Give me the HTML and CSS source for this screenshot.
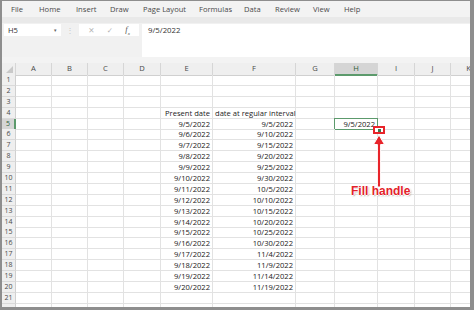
FILE: index.html
```html
<!DOCTYPE html>
<html>
<head>
<meta charset="utf-8">
<link rel="stylesheet" href="styles.css">
</head>
<body>
<div class="app">
  <div class="menubar">
    <span>File</span><span>Home</span><span>Insert</span><span>Draw</span><span>Page Layout</span><span>Formulas</span><span>Data</span><span>Review</span><span>View</span><span>Help</span>
  </div>
  <div class="band"></div>
  <div class="formula-row">
    <div class="namebox"><span>H5</span><span class="caret">&#9662;</span></div>
    <div class="dots">&#8942;</div>
    <div class="fxbox">
      <span class="ico">&#10005;</span><span class="ico">&#10003;</span><span class="fx">f<sub>x</sub></span>
    </div>
    <div class="finput">9/5/2022</div>
  </div>
  <div class="sheet">
    <div class="row hdr"><span class="corner"></span><span>A</span><span>B</span><span>C</span><span>D</span><span>E</span><span>F</span><span>G</span><span class="hsel">H</span><span>I</span><span>J</span><span>K</span></div>
    <div class="row"><span class="rh">1</span><span></span><span></span><span></span><span></span><span></span><span></span><span></span><span></span><span></span><span></span><span></span></div>
    <div class="row"><span class="rh">2</span><span></span><span></span><span></span><span></span><span></span><span></span><span></span><span></span><span></span><span></span><span></span></div>
    <div class="row"><span class="rh">3</span><span></span><span></span><span></span><span></span><span></span><span></span><span></span><span></span><span></span><span></span><span></span></div>
    <div class="row"><span class="rh">4</span><span></span><span></span><span></span><span></span><span class="num">Present date</span><span class="txt">date at regular interval</span><span></span><span></span><span></span><span></span><span></span></div>
    <div class="row"><span class="rh rsel">5</span><span></span><span></span><span></span><span></span><span class="num">9/5/2022</span><span class="num">9/5/2022</span><span></span><span class="num sel">9/5/2022</span><span></span><span></span><span></span></div>
    <div class="row"><span class="rh">6</span><span></span><span></span><span></span><span></span><span class="num">9/6/2022</span><span class="num">9/10/2022</span><span></span><span></span><span></span><span></span><span></span></div>
    <div class="row"><span class="rh">7</span><span></span><span></span><span></span><span></span><span class="num">9/7/2022</span><span class="num">9/15/2022</span><span></span><span></span><span></span><span></span><span></span></div>
    <div class="row"><span class="rh">8</span><span></span><span></span><span></span><span></span><span class="num">9/8/2022</span><span class="num">9/20/2022</span><span></span><span></span><span></span><span></span><span></span></div>
    <div class="row"><span class="rh">9</span><span></span><span></span><span></span><span></span><span class="num">9/9/2022</span><span class="num">9/25/2022</span><span></span><span></span><span></span><span></span><span></span></div>
    <div class="row"><span class="rh">10</span><span></span><span></span><span></span><span></span><span class="num">9/10/2022</span><span class="num">9/30/2022</span><span></span><span></span><span></span><span></span><span></span></div>
    <div class="row"><span class="rh">11</span><span></span><span></span><span></span><span></span><span class="num">9/11/2022</span><span class="num">10/5/2022</span><span></span><span></span><span></span><span></span><span></span></div>
    <div class="row"><span class="rh">12</span><span></span><span></span><span></span><span></span><span class="num">9/12/2022</span><span class="num">10/10/2022</span><span></span><span></span><span></span><span></span><span></span></div>
    <div class="row"><span class="rh">13</span><span></span><span></span><span></span><span></span><span class="num">9/13/2022</span><span class="num">10/15/2022</span><span></span><span></span><span></span><span></span><span></span></div>
    <div class="row"><span class="rh">14</span><span></span><span></span><span></span><span></span><span class="num">9/14/2022</span><span class="num">10/20/2022</span><span></span><span></span><span></span><span></span><span></span></div>
    <div class="row"><span class="rh">15</span><span></span><span></span><span></span><span></span><span class="num">9/15/2022</span><span class="num">10/25/2022</span><span></span><span></span><span></span><span></span><span></span></div>
    <div class="row"><span class="rh">16</span><span></span><span></span><span></span><span></span><span class="num">9/16/2022</span><span class="num">10/30/2022</span><span></span><span></span><span></span><span></span><span></span></div>
    <div class="row"><span class="rh">17</span><span></span><span></span><span></span><span></span><span class="num">9/17/2022</span><span class="num">11/4/2022</span><span></span><span></span><span></span><span></span><span></span></div>
    <div class="row"><span class="rh">18</span><span></span><span></span><span></span><span></span><span class="num">9/18/2022</span><span class="num">11/9/2022</span><span></span><span></span><span></span><span></span><span></span></div>
    <div class="row"><span class="rh">19</span><span></span><span></span><span></span><span></span><span class="num">9/19/2022</span><span class="num">11/14/2022</span><span></span><span></span><span></span><span></span><span></span></div>
    <div class="row"><span class="rh">20</span><span></span><span></span><span></span><span></span><span class="num">9/20/2022</span><span class="num">11/19/2022</span><span></span><span></span><span></span><span></span><span></span></div>
    <div class="row"><span class="rh">21</span><span></span><span></span><span></span><span></span><span></span><span></span><span></span><span></span><span></span><span></span><span></span></div>
    <div class="row"><span class="rh"></span><span></span><span></span><span></span><span></span><span></span><span></span><span></span><span></span><span></span><span></span><span></span></div>

    <div class="handle-mark"><span class="handle"></span></div>
    <svg class="arrow" width="20" height="56" viewBox="0 0 20 56">
      <polygon points="10,1 15.5,10.5 11.6,10.5 11.6,53 8.4,53 8.4,10.5 4.5,10.5" fill="#e8242a" stroke="#ffffff" stroke-width="1" stroke-linejoin="round"/>
    </svg>
    <div class="label">Fill handle</div>
  </div>
</div>
</body>
</html>
```

FILE: styles.css
```css
html, body {
  margin: 0;
  padding: 0;
}
body {
  background: #8e8e8e;
  width: 474px;
  height: 310px;
  overflow: hidden;
}
.app {
  margin: 1px 0 0 2px;
  width: 468px;
  height: 306px;
  background: #f3f3f3;
  overflow: hidden;
  font-family: "Open Sans", "Liberation Sans", sans-serif;
  color: #444;
}
.menubar {
  height: 16px;
  display: grid;
  grid-template-columns: 28px 37px 34px 33px 56px 45px 31px 38px 31px auto;
  padding-left: 9px;
  align-items: center;
  font-size: 7.6px;
  color: #4a4a4a;
  background: #f3f3f3;
}
.band {
  height: 6px;
  background: #e9e9e9;
}
.formula-row {
  height: 34px;
  display: flex;
  align-items: flex-start;
  padding-top: 1px;
  box-sizing: border-box;
  margin-bottom: 6px;
  background: #f1f1f1;
}
.namebox {
  margin-left: 2px;
  width: 57px;
  height: 12px;
  background: #fff;
  display: flex;
  align-items: center;
  justify-content: space-between;
  padding: 0 4px 0 4px;
  box-sizing: border-box;
  font-size: 7.6px;
  color: #333;
}
.caret {
  font-size: 5px;
  color: #666;
}
.dots {
  width: 18px;
  text-align: center;
  font-size: 8px;
  line-height: 12px;
  color: #c8c8c8;
}
.fxbox {
  width: 60px;
  height: 12px;
  background: #fff;
  display: flex;
  align-items: center;
  justify-content: space-around;
  padding: 0 3px;
  box-sizing: border-box;
}
.ico {
  font-size: 7.5px;
  color: #b4b4b4;
  font-family: "DejaVu Sans", sans-serif;
}
.fx {
  font-family: "Liberation Serif", serif;
  font-style: italic;
  font-size: 8.5px;
  color: #555;
}
.fx sub {
  font-size: 5px;
}
.finput {
  margin-left: 3px;
  flex: 1;
  height: 33px;
  background: #fff;
  font-size: 7.8px;
  color: #333;
  padding: 1px 6px;
  box-sizing: border-box;
}
.sheet {
  position: relative;
  background: #fff;
  height: 244px;
}
.row {
  display: grid;
  grid-template-columns: 14px 36px 36px 36px 37px 52px 83px 39px 43px 37px 36px 36px;
  height: 10.9px;
  font-size: 7.6px;
  line-height: 10px;
  color: #222;
}
.row > span {
  border-right: 1px solid #e2e2e2;
  border-bottom: 1px solid #e2e2e2;
  box-sizing: border-box;
  white-space: nowrap;
  overflow: visible;
  position: relative;
}
.row.hdr {
  height: 12px;
  line-height: 11px;
}
.row.hdr > span {
  background: #efefef;
  border-right: 1px solid #d6d6d6;
  border-bottom: 1px solid #d0d0d0;
  text-align: center;
  color: #4a4a4a;
}
.row > .rh {
  background: #efefef;
  border-right: 1px solid #d0d0d0;
  border-bottom: 1px solid #dadada;
  text-align: center;
  color: #4a4a4a;
  font-size: 7px;
}
.row.hdr > .hsel {
  background: #d5d5d5;
  border-bottom: 2px solid #5c9a6c;
  color: #2f5f3c;
}
.row > .rsel {
  background: #d5d5d5;
  border-right: 2px solid #5c9a6c;
  color: #2f5f3c;
}
.corner::after {
  content: "";
  position: absolute;
  right: 2px;
  bottom: 2px;
  border-style: solid;
  border-width: 0 0 7px 7px;
  border-color: transparent transparent #c9c9c9 transparent;
}
.num {
  text-align: right;
  padding-right: 2px;
}
.txt {
  text-align: left;
  padding-left: 2px;
}
.sel::after {
  content: "";
  position: absolute;
  left: -1px;
  top: -1px;
  right: -1px;
  bottom: -1px;
  border: 1.5px solid #5c9a6c;
}
.handle-mark {
  position: absolute;
  left: 371px;
  top: 63px;
  width: 12px;
  height: 8px;
  border: 2px solid #e8242a;
  box-sizing: border-box;
  display: flex;
  align-items: center;
  justify-content: center;
  background: #fff;
}
.handle {
  width: 3px;
  height: 3px;
  background: #3d7a4f;
}
.arrow {
  position: absolute;
  left: 367px;
  top: 71px;
}
.label {
  position: absolute;
  left: 349px;
  top: 121px;
  font-family: "Liberation Sans", Arial, sans-serif;
  font-weight: bold;
  font-size: 12px;
  line-height: 14px;
  color: #e3222a;
  text-shadow: 1px 0 0 #fff, -1px 0 0 #fff, 0 1px 0 #fff, 0 -1px 0 #fff, 1px 1px 1.5px rgba(0,0,0,0.45);
}
```
